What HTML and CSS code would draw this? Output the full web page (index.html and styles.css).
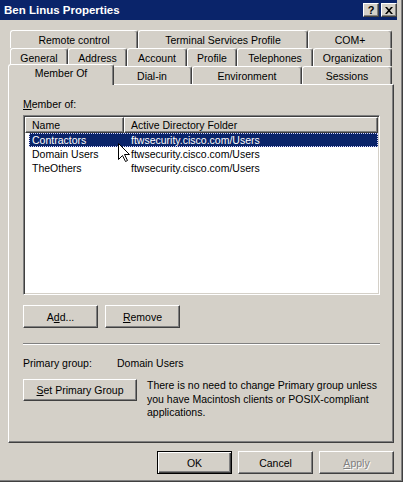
FILE: index.html
```html
<!DOCTYPE html>
<html>
<head>
<meta charset="utf-8">
<link rel="stylesheet" href="styles.css">
</head>
<body>
<div class="window">
  <div class="titlebar">
    <span class="title">Ben Linus Properties</span>
    <div class="capbtns">
      <span class="capbtn help">?</span>
      <span class="capbtn close"><svg width="8" height="7" viewBox="0 0 8 7"><path d="M0 0h2l2 2.2L6 0h2L5 3.5 8 7H6L4 4.8 2 7H0l3-3.5z" fill="#000"/></svg></span>
    </div>
  </div>

  <div class="tabs">
    <div class="tabrow">
      <span class="tab w128">Remote control</span>
      <span class="tab w170">Terminal Services Profile</span>
      <span class="tab w84">COM+</span>
    </div>
    <div class="tabrow">
      <span class="tab w58">General</span>
      <span class="tab w59">Address</span>
      <span class="tab w60">Account</span>
      <span class="tab w50">Profile</span>
      <span class="tab w76">Telephones</span>
      <span class="tab w79">Organization</span>
    </div>
    <div class="tabrow">
      <span class="tab sel w102">Member Of</span>
      <span class="tab w80">Dial-in</span>
      <span class="tab w110">Environment</span>
      <span class="tab w90">Sessions</span>
    </div>
  </div>

  <div class="panel">
    <div class="label"><u>M</u>ember of:</div>
    <div class="listbox">
      <div class="header">
        <span class="hcell c1">Name</span>
        <span class="hcell c2">Active Directory Folder</span>
      </div>
      <div class="lrow selected"><span class="lc1">Contractors</span><span class="lc2">ftwsecurity.cisco.com/Users</span></div>
      <div class="lrow"><span class="lc1">Domain Users</span><span class="lc2">ftwsecurity.cisco.com/Users</span></div>
      <div class="lrow"><span class="lc1">TheOthers</span><span class="lc2">ftwsecurity.cisco.com/Users</span></div>
    </div>
    <div class="btnrow">
      <span class="btn">A<u>d</u>d...</span>
      <span class="btn"><u>R</u>emove</span>
    </div>
    <div class="sep"></div>
    <div class="prow">
      <span class="plabel">Primary group:</span>
      <span>Domain Users</span>
    </div>
    <div class="setrow">
      <span class="btn wide"><u>S</u>et Primary Group</span>
      <div class="note">There is no need to change Primary group unless<br>you have Macintosh clients or POSIX-compliant<br>applications.</div>
    </div>
  </div>

  <div class="footer">
    <span class="btn default">OK</span>
    <span class="btn">Cancel</span>
    <span class="btn disabled"><u>A</u>pply</span>
  </div>

  <svg class="cursor" width="13" height="20" viewBox="0 0 13 20"><path d="M0.5 0.5V16.5L4.5 12.5L7.5 18.5L9.5 17.5L6.5 11.5H11.5Z" fill="#fff" stroke="#000" stroke-width="1" stroke-linejoin="miter"/></svg>
</div>
</body>
</html>
```

FILE: styles.css
```css
* { box-sizing: border-box; }

body {
  margin: 0;
  background: #d4d0c8;
  font-family: "Liberation Sans", Arial, sans-serif;
  font-size: 10.5px;
  color: #000;
}

.window {
  position: relative;
  width: 403px;
  height: 482px;
  background: #d4d0c8;
  display: flex;
  flex-direction: column;
  box-shadow: inset -1px -1px #404040, inset -2px -2px #808080;
}

.titlebar {
  height: 20px;
  margin-right: 6px;
  background: #0a246a;
  display: flex;
  align-items: center;
  justify-content: space-between;
  padding: 0 0 0 4px;
}

.title {
  color: #fff;
  font-weight: bold;
  font-size: 11.5px;
}

.capbtns {
  display: flex;
  gap: 2px;
  align-self: flex-start;
  margin-top: 3px;
}

.capbtn {
  width: 16px;
  height: 14px;
  background: #d4d0c8;
  border: 1px solid;
  border-color: #fff #404040 #404040 #fff;
  box-shadow: inset -1px -1px #808080;
  display: flex;
  align-items: center;
  justify-content: center;
  font-weight: bold;
  font-size: 11px;
  line-height: 12px;
}

.tabs {
  padding-top: 10px;
}

.tabrow {
  display: flex;
  margin-left: 10px;
  height: 18px;
  align-items: flex-start;
}

.tab {
  height: 18px;
  border: 1px solid;
  border-color: #fff #404040 transparent #fff;
  border-bottom: none;
  border-radius: 3px 3px 0 0;
  box-shadow: inset -1px 0 #808080;
  background: #d4d0c8;
  text-align: center;
  line-height: 16px;
  padding-top: 1px;
  white-space: nowrap;
}

.tab.sel {
  position: relative;
  z-index: 1;
  height: 21px;
  margin: -2px -2px 0 -2px;
  padding-top: 0;
}

.w50 { width: 50px; }
.w58 { width: 58px; }
.w59 { width: 59px; }
.w60 { width: 60px; }
.w76 { width: 76px; }
.w79 { width: 79px; }
.w80 { width: 80px; }
.w84 { width: 84px; }
.w90 { width: 90px; }
.w102 { width: 102px; }
.tab.sel.w102 { width: 106px; }
.w110 { width: 110px; }
.w128 { width: 128px; }
.w170 { width: 170px; }

.panel {
  margin-left: 8px;
  width: 386px;
  height: 359px;
  border: 1px solid;
  border-color: #fff #404040 #404040 #fff;
  box-shadow: inset -1px -1px #808080;
  padding: 13px 13px 0 14px;
}

.label {
  line-height: 13px;
  height: 13px;
  margin-bottom: 4px;
}

.listbox {
  width: 357px;
  height: 180px;
  background: #fff;
  border: 1px solid;
  border-color: #808080 #fff #fff #808080;
  box-shadow: inset 1px 1px #404040, inset -1px -1px #d4d0c8;
  padding: 1px;
}

.header {
  display: flex;
  height: 16px;
}

.hcell {
  height: 16px;
  background: #d4d0c8;
  border: 1px solid;
  border-color: #fff #404040 #404040 #fff;
  box-shadow: inset -1px -1px #808080;
  line-height: 14px;
  white-space: nowrap;
}

.hcell.c1 { width: 99px; padding-left: 6px; }
.hcell.c2 { width: 254px; padding-left: 6px; }

.lrow {
  display: flex;
  height: 14px;
  margin-left: 4px;
  width: 349px;
  border: 1px solid transparent;
  line-height: 12px;
  white-space: nowrap;
}

.lrow.selected {
  background: #0a246a;
  color: #fff;
  border: 1px dotted #d8d8ff;
}

.lc1 { width: 94px; padding-left: 2px; }
.lc2 { padding-left: 7px; }

.btnrow {
  display: flex;
  gap: 7px;
  margin-top: 10px;
}

.btn {
  width: 75px;
  height: 23px;
  border: 1px solid;
  border-color: #fff #404040 #404040 #fff;
  box-shadow: inset -1px -1px #808080;
  background: #d4d0c8;
  display: flex;
  align-items: center;
  justify-content: center;
  white-space: nowrap;
}

.btn.wide {
  width: 114px;
  height: 22px;
  flex: none;
}

.btn.default {
  border: 1px solid #000;
  box-shadow: inset 1px 1px #fff, inset -1px -1px #404040, inset -2px -2px #808080;
}

.btn.disabled {
  color: #808080;
  text-shadow: 1px 1px #fff;
}

.sep {
  width: 357px;
  height: 2px;
  margin-top: 15px;
  border-top: 1px solid #808080;
  border-bottom: 1px solid #fff;
}

.prow {
  display: flex;
  margin-top: 12px;
  line-height: 13px;
}

.plabel { width: 94px; }

.setrow {
  display: flex;
  gap: 10px;
  margin-top: 9px;
  align-items: flex-start;
}

.note {
  line-height: 13.5px;
  white-space: nowrap;
}

.footer {
  display: flex;
  justify-content: flex-end;
  gap: 6px;
  margin-top: 8px;
  padding-right: 9px;
}

.cursor {
  position: absolute;
  left: 118px;
  top: 143px;
}
```
